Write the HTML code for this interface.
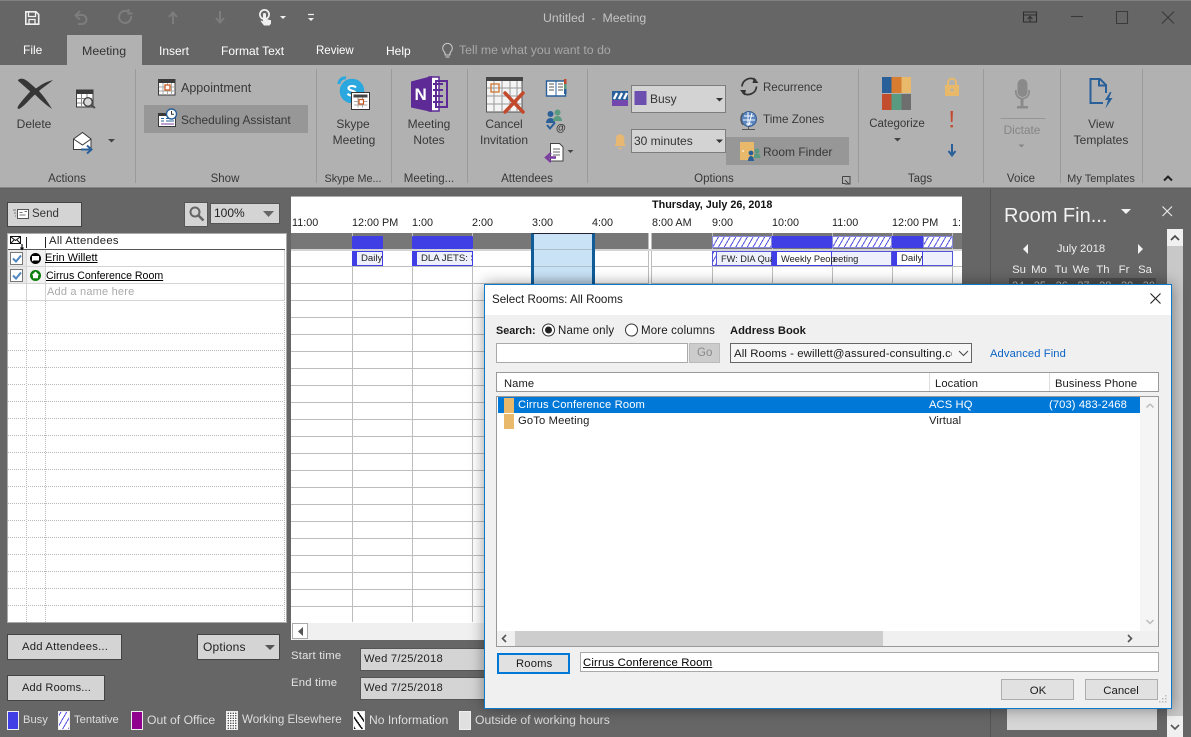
<!DOCTYPE html>
<html><head><meta charset="utf-8"><style>
html,body{margin:0;padding:0}
body{width:1191px;height:737px;overflow:hidden;background:#666;position:relative;font-family:"Liberation Sans",sans-serif;font-size:12px;color:#222}
.t{position:absolute;white-space:nowrap;line-height:16px;height:16px}
.c{transform:translateX(-50%)}
.b{position:absolute;box-sizing:border-box}
.w{color:#fff}
.r{color:#383838;font-size:12px}
.g{font-size:11.500px}
.btn{position:absolute;box-sizing:border-box;background:#d4d4d4;border:1px solid #3e3e3e}
svg{position:absolute;left:0;top:0}
.dlg .t{color:#1a1a1a}
.lg{color:#ddd;font-size:11.800px}
.tm{font-size:10.800px;top:215px}
</style></head><body>
<div class="b" style="left:0;top:0;width:1191px;height:1px;background:#808080"></div>
<div class="b" style="left:67px;top:35px;width:75px;height:31px;background:#b1b1b1"></div>
<div class="b" style="left:0;top:65px;width:1191px;height:123px;background:#b1b1b1"></div>
<div class="b" style="left:144px;top:105px;width:164px;height:28px;background:#979797"></div>
<div class="b" style="left:726px;top:137px;width:123px;height:28px;background:#979797"></div>
<div class="b" style="left:135px;top:69px;width:1px;height:114px;background:#9a9a9a"></div>
<div class="b" style="left:316px;top:69px;width:1px;height:114px;background:#9a9a9a"></div>
<div class="b" style="left:391px;top:69px;width:1px;height:114px;background:#9a9a9a"></div>
<div class="b" style="left:467px;top:69px;width:1px;height:114px;background:#9a9a9a"></div>
<div class="b" style="left:587px;top:69px;width:1px;height:114px;background:#9a9a9a"></div>
<div class="b" style="left:858px;top:69px;width:1px;height:114px;background:#9a9a9a"></div>
<div class="b" style="left:983px;top:69px;width:1px;height:114px;background:#9a9a9a"></div>
<div class="b" style="left:1060px;top:69px;width:1px;height:114px;background:#9a9a9a"></div>
<div class="b" style="left:1142px;top:69px;width:1px;height:114px;background:#9a9a9a"></div>

<div class="t" style="left:543px;top:10px;color:#c4c4c4;font-size:12.300px">Untitled &nbsp;-&nbsp; Meeting</div>
<div class="t w" style="left:23px;top:42px">File</div>
<div class="t" style="left:82px;top:43px;color:#333;font-size:12.400px">Meeting</div>
<div class="t w" style="left:159px;top:43px">Insert</div>
<div class="t w" style="left:221px;top:43px;font-size:12px">Format Text</div>
<div class="t w" style="left:316px;top:43px;font-size:11.500px">Review</div>
<div class="t w" style="left:386px;top:43px">Help</div>
<div class="t" style="left:459px;top:42px;color:#a8a8a8;font-size:12.300px">Tell me what you want to do</div>

<div class="t r c" style="left:34px;top:116px">Delete</div>
<div class="t r" style="left:181px;top:80px;font-size:12.500px">Appointment</div>
<div class="t r" style="left:181px;top:112px;font-size:11.900px">Scheduling Assistant</div>
<div class="t r c" style="left:353px;top:116px">Skype</div>
<div class="t r c" style="left:354px;top:132px">Meeting</div>
<div class="t r c" style="left:429px;top:116px">Meeting</div>
<div class="t r c" style="left:429px;top:132px">Notes</div>
<div class="t r c" style="left:504px;top:116px">Cancel</div>
<div class="t r c" style="left:504px;top:132px">Invitation</div>
<div class="t r" style="left:763px;top:80px;font-size:11.500px">Recurrence</div>
<div class="t r" style="left:763px;top:112px;font-size:11.700px">Time Zones</div>
<div class="t r" style="left:763px;top:144px;font-size:12px">Room Finder</div>
<div class="t r c" style="left:897px;top:116px;font-size:11.500px">Categorize</div>
<div class="t c" style="left:1022px;top:122px;color:#858585;font-size:11.800px">Dictate</div>
<div class="t r c" style="left:1101px;top:116px">View</div>
<div class="t r c" style="left:1101px;top:132px">Templates</div>
<div class="t r c g" style="left:67px;top:171px">Actions</div>
<div class="t r c g" style="left:225px;top:171px">Show</div>
<div class="t r c" style="left:353px;top:171px;font-size:10.800px">Skype Me...</div>
<div class="t r c g" style="left:429px;top:171px">Meeting...</div>
<div class="t r c g" style="left:527px;top:171px">Attendees</div>
<div class="t r c g" style="left:714px;top:171px">Options</div>
<div class="t r c g" style="left:920px;top:171px">Tags</div>
<div class="t r c g" style="left:1021px;top:171px">Voice</div>
<div class="t r c" style="left:1101px;top:171px;font-size:11px">My Templates</div>

<div class="b" style="left:631px;top:85px;width:95px;height:28px;background:#d3d3d3;border:1px solid #7d7d7d"></div>
<div class="t" style="left:650px;top:91px;color:#333">Busy</div>
<div class="b" style="left:631px;top:129px;width:95px;height:24px;background:#d3d3d3;border:1px solid #7d7d7d"></div>
<div class="t" style="left:634px;top:133px;color:#333">30 minutes</div>

<svg width="1191" height="190" viewBox="0 0 1191 190">
<g fill="none" stroke="#f0f0f0" stroke-width="1.600"><path d="M25.800 11.800H36l2.700 2.700v9.700H25.800z"/><path d="M28.500 12v4.500h7V12M29 24v-4.500h6V24" stroke-width="1.300"/></g>
<g fill="none" stroke="#7d7d7d" stroke-width="2"><path d="M76 15h6a4.500 4.500 0 0 1 0 9h-4"/><path d="M80 11l-4.500 4.500 4.500 4" /><path d="M131 16a6 6 0 1 1-2.500-4"/><path d="M128.500 9v4.500h4" /><path d="M173 24v-11M169 17l4-4.500 4 4.500"/><path d="M220 11v11M216 18l4 4.500 4-4.500"/></g>
<circle cx="264.500" cy="14.500" r="4.600" fill="none" stroke="#f0f0f0" stroke-width="1.700"/><path d="M263 14.500a1.500 1.500 0 0 1 3 0v4.500l5 1.200v3.300l-1.500 2h-5.500l-3.500-4.500 1 -.5 1.500 1z" fill="#f0f0f0"/>
<path d="M280 16h6l-3 3zM308 18h6l-3 3z" fill="#f0f0f0"/><path d="M308 14.500h6" stroke="#f0f0f0" stroke-width="1.200"/>
<g fill="none" stroke="#2e2e2e" stroke-width="1.100"><path d="M1023.500 12h13v10h-13zM1023.500 15h13M1030 22v-5M1027.500 19l2.500-2.500 2.500 2.500"/><path d="M1071 16.500h12" stroke="#3a3a3a"/><path d="M1116.500 11.500h11v12h-11z" stroke="#3a3a3a"/><path d="M1162 11.500l12 12M1174 11.500l-12 12" stroke="#3a3a3a"/></g>
<g fill="none" stroke="#d0d0d0" stroke-width="1"><path d="M444 51.500a4.800 4.800 0 1 1 7 0c-1 1-1.200 2-1.200 3.500h-4.600c0-1.500-.2-2.500-1.200-3.500zM445.500 57h4"/></g>

<path d="M18 80c3-2.500 6-1.500 10 1.500l8 7c4-3 9-6.500 17-8.500-4 3.500-10 7.500-14 11 4.500 5 9 11 13 18-6-4-12-9.500-17-14.500-5 4-9 10-15 14-2.500 1-3-.5-1.800-2.500 3-4.500 7-9 12-14.500l-9-8c-2.500-2-3.500-3-3.200-3.500z" fill="#363636"/>
<g><path d="M76.500 90h16.500v17h-16.500z" fill="#fff" stroke="#3a3a3a"/><path d="M76 90h17v4H76z" fill="#3a3a3a"/><path d="M77 98.500h15M77 103h12M81.500 94v13M87 94v13" stroke="#8a8a8a" fill="none"/><circle cx="88" cy="102" r="4.300" fill="#d8d8d8" stroke="#4a4a4a" stroke-width="1.400"/><path d="M91 105l4 3" stroke="#4a4a4a" stroke-width="2"/></g>
<g><path d="M73.500 139l9-6.500 8.500 6.500v10.500h-17.500z" fill="#fff" stroke="#3a3a3a"/><path d="M73.500 139l9 6 8.500-6" fill="none" stroke="#3a3a3a"/><path d="M81 149.500h9M87 145.500l4.500 4-4.500 4" fill="none" stroke="#2a6099" stroke-width="2"/></g>
<path d="M108 139h7l-3.500 3.500z" fill="#444"/>
<g><path d="M158.500 79.500h16.500v15.500h-16.500z" fill="#fff" stroke="#3a3a3a"/><path d="M158 79h17v4h-17z" fill="#3a3a3a"/><path d="M159 87h16M159 91h16M163 83v12M167.500 83v12M171.500 83v12" stroke="#a8a8a8" fill="none"/><path d="M165 85h5v5h-5z" fill="#fff" stroke="#c9581c" stroke-width="1.300"/></g>
<g><path d="M158.500 113.500h17v13h-17z" fill="#fff" stroke="#3a3a3a"/><path d="M158 113h9v3h-9z" fill="#3a3a3a"/><path d="M161 118.500h3M166 118.500h6M161 121h3M166 121h8" stroke="#2a6099" fill="none"/><path d="M161 124h13" stroke="#7b3fa0" fill="none"/><circle cx="171.500" cy="114" r="5" fill="#fff" stroke="#2a6099" stroke-width="1.400"/><path d="M171.500 111v3.200h2.500" stroke="#333" fill="none"/></g>
<g><circle cx="352" cy="91" r="10.500" fill="none" stroke="#29a8e0" stroke-width="3.500"/><path d="M339 84a6 6 0 0 1 7-6" stroke="#29a8e0" stroke-width="3" fill="none"/><circle cx="352" cy="91" r="8.800" fill="#29a8e0"/><path d="M356 87.500c-2-2-7-2.200-7.500.5-.4 3 7.500 2.200 7 5.500-.4 2.800-6 2.600-8 .2" stroke="#fff" stroke-width="2.100" fill="none"/><path d="M351.500 92.500h18v17h-18z" fill="#fff" stroke="#333"/><path d="M353.500 94.500h14v3h-14z" fill="#444"/><path d="M354 101.500h13.500M354 105h13.500M358 97.500v10M362.500 97.500v10" stroke="#aaa"/><path d="M359 99.500h4.500v4.500H359z" fill="#fff" stroke="#c9581c" stroke-width="1.200"/></g>
<g><path d="M429 77h10v34h-10z" fill="#fff" stroke="#5e2a96" stroke-width="1.500"/><path d="M436 81h11v26h-11z" fill="none" stroke="#5e2a96" stroke-width="2"/><path d="M433 84h10M433 90h10M433 96h10M433 102h10" stroke="#5e2a96" stroke-width="2"/><path d="M411 81.500l21-5.500v36l-21-4.500z" fill="#5e2a96"/><text x="414.500" y="100" font-family="Liberation Sans,sans-serif" font-size="17" font-weight="bold" fill="#fff">N</text></g>
<g><path d="M486.500 79h35.500v33h-35.500z" fill="#f4f4f4" stroke="#555"/><path d="M486 77h37v4h-37z" fill="#444"/><path d="M487 88h35M487 96h35M487 104h35M494 81v31M502 81v31M510 81v31M517 81v31" stroke="#999"/><path d="M491 84h8v8h-8z" fill="none" stroke="#d0742c" stroke-width="1.300"/><path d="M505 93l18 19M523 93l-18 19" stroke="#c2492c" stroke-width="3.500" stroke-linecap="round"/></g>
<g><path d="M546.500 81h19v15h-19z" fill="#fff" stroke="#2a6099" stroke-width="1.400"/><path d="M556 81v15" stroke="#2a6099"/><path d="M549 84h5M549 87h5M549 90h5M558 84h5M558 87h5M558 90h5" stroke="#555"/><path d="M564 79h2.500v5H564z" fill="#c2492c"/><path d="M564 84h2.500v5H564z" fill="#5a9a80"/><path d="M564 89h2.500v5H564z" fill="#2a6099"/></g>
<g><circle cx="550.500" cy="114" r="3" fill="#2a6099"/><path d="M546 123c0-3 2-5 4.500-5s4.500 2 4.500 5z" fill="#2a6099"/><circle cx="557.500" cy="112.500" r="3" fill="#5a9a80"/><path d="M553 121c0-3 2-5 4.500-5s4.500 2 4.500 5z" fill="#5a9a80"/><path d="M547 125l3 3.500 5-6" stroke="#2a6099" stroke-width="2" fill="none"/><text x="556" y="131" font-family="Liberation Sans,sans-serif" font-size="10" font-weight="bold" fill="#333">@</text></g>
<g><path d="M550.500 143.500h9l3.500 3.500v14h-12.500z" fill="#fff" stroke="#444"/><path d="M553 149h7M553 152h7M553 155h7" stroke="#666"/><path d="M546 157.500h10" stroke="#7b3fa0" stroke-width="2.600"/><path d="M551 153l-5 4.500 5 4.500" stroke="#7b3fa0" stroke-width="2.400" fill="none"/></g>
<path d="M567.500 150h6l-3 3z" fill="#444"/>
<g><path d="M612 91h16v15h-16z" fill="#7347ad"/><path d="M612 91h16v9h-16z" fill="#2a6099"/><path d="M614 99l3-6M619 99l3-6M624 99l3-6" stroke="#fff" stroke-width="2.400"/></g>
<path d="M634.500 91h12v14h-12z" fill="#6d4fb0"/>
<path d="M716 98h7l-3.500 3.500zM716 139.500h7l-3.500 3.500z" fill="#333"/>
<g fill="#e8b872"><path d="M616 144v-5.500a4.200 4.200 0 0 1 8.400 0V144l2.100 2h-12.700z"/><path d="M618 147.500h4.500l-2.200 2.500z"/></g>
<g fill="none" stroke="#333" stroke-width="1.700"><path d="M742 86.500a8.500 8.500 0 0 1 14-6M756.500 86.500a8.500 8.500 0 0 1-14 6"/></g><path d="M754 77.500l4.500 5.500-6 0zM744.500 95.500l-4.500-5.500 6 0z" fill="#333"/>
<g><circle cx="749" cy="119" r="7.500" fill="#5b86c0" stroke="#3a5f8f"/><path d="M744 116h10M743 120h12M746 124h6M748 112v14M752 113l-3 12" stroke="#fff" stroke-width="1"/><path d="M742 129.500h13M748.500 126.500v3M743 113a9 9 0 0 0 0 12" stroke="#555" fill="none"/></g>
<g><path d="M740 142h14v18h-14z" fill="#e8b96b"/><path d="M742 151h2" stroke="#fff"/><circle cx="757" cy="151" r="2.400" fill="#5a9a80"/><path d="M753.500 158c0-3 1.500-4.500 3.500-4.500s3.500 1.500 3.500 4.500z" fill="#5a9a80"/><circle cx="751" cy="153" r="2.400" fill="#2a6099"/><path d="M748 161c0-3 1.200-5 3-5s3 2 3 5z" fill="#2a6099"/></g>
<path d="M842.500 176.500h7.500v7M849 184l-4-4M845 184h5v-4M842.500 176.500v7h3" fill="none" stroke="#444" stroke-width="1"/>
<g><path d="M882 77h9.500v16H882z" fill="#2a6099"/><path d="M891.500 77h10v16h-10z" fill="#d87c2f"/><path d="M901.500 77h9.500v16h-9.500z" fill="#e8b96b"/><path d="M882 94h9.500v16H882z" fill="#c24e2e"/><path d="M891.500 94h10v16h-10z" fill="#5a9a80"/><path d="M901.500 94h9.500v16h-9.500z" fill="#6e6e6e"/></g>
<path d="M894 138h7l-3.500 3.500z" fill="#444"/>
<g><path d="M945 85h14v11h-14z" fill="#e8b96b"/><path d="M948 85v-2.500a4 4 0 0 1 8 0V85" fill="none" stroke="#e8b96b" stroke-width="2"/><circle cx="952" cy="90" r="1.500" fill="#b1b1b1"/></g>
<path d="M950.500 111h2.400l-.4 11h-1.600zM950.500 125h2.400v2.400h-2.400z" fill="#c2492c"/>
<path d="M952 144v11M948.500 151l3.500 4.500 3.500-4.500" fill="none" stroke="#2a6099" stroke-width="2"/>
<g fill="#8a8a8a"><rect x="1017.500" y="79" width="10" height="18" rx="5"/><path d="M1015 90h1.700v2a5.800 5.800 0 0 0 11.600 0v-2h1.700v2a7.500 7.500 0 0 1-6.500 7.400V106h-3v-6.600a7.500 7.500 0 0 1-5.500-7.400z"/><path d="M1017 106h11v2.500h-11z"/></g>
<path d="M1000.500 118.500h45" stroke="#969696"/>
<path d="M1018.500 144.500h6l-3 3z" fill="#858585"/>
<g fill="none" stroke="#2a6099" stroke-width="2"><path d="M1103 103h-12.500V79h9.500l6 6v8"/><path d="M1099 79.500v6h7"/></g><path d="M1110 92l-5 8h3l-2.500 8.500 7-10.500h-3.500l2.500-6z" fill="#2a6099"/>
<path d="M1164 180.500l4-4 4 4" fill="none" stroke="#222" stroke-width="2"/>
<path d="M0 188h1191" stroke="#5a5a5a" stroke-width="1"/>
</svg>

<div class="btn" style="left:7px;top:202px;width:75px;height:25px;border-color:#444"></div>
<svg width="20" height="20" style="left:13px;top:204px"><path d="M4.500 5.500h11v9h-11z" fill="#fff" stroke="#555"/><path d="M6.500 8.500h3M6.500 11h6M11.500 7.500h2.500" stroke="#777"/><path d="M0 6h3M1 9h2M2 12h1" stroke="#777"/></svg>
<div class="t" style="left:32px;top:206px;font-size:11.500px;color:#333">Send</div>
<div class="btn" style="left:184px;top:202px;width:24px;height:25px;border-color:#555"></div>
<svg width="20" height="20" style="left:187px;top:204px"><circle cx="8" cy="8" r="4.500" fill="none" stroke="#666" stroke-width="2"/><path d="M11.500 11.500l5 5" stroke="#666" stroke-width="2.600"/></svg>
<div class="btn" style="left:210px;top:203px;width:70px;height:21px;border-color:#555"></div>
<div class="t" style="left:214px;top:205px">100%</div>
<svg width="14" height="8" style="left:262px;top:210px"><path d="M1 1h11l-5.500 6z" fill="#666"/></svg>

<div class="b" style="left:7px;top:233px;width:280px;height:390px;background:#fff;border:1px solid #aaa"></div>
<div class="b" style="left:8px;top:317px;width:278px;height:305px;background:repeating-linear-gradient(to bottom,#fff 0,#fff 16px,transparent 16px,transparent 17px),repeating-linear-gradient(to right,#b8b8b8 0,#b8b8b8 1px,#fff 1px,#fff 2px)"></div>
<div class="b" style="left:26px;top:283px;width:1px;height:339px;background:repeating-linear-gradient(to bottom,#b8b8b8 0,#b8b8b8 1px,#fff 1px,#fff 2px)"></div>
<div class="b" style="left:45px;top:283px;width:1px;height:339px;background:repeating-linear-gradient(to bottom,#b8b8b8 0,#b8b8b8 1px,#fff 1px,#fff 2px)"></div>
<div class="b" style="left:284px;top:300px;width:1px;height:322px;background:repeating-linear-gradient(to bottom,#b8b8b8 0,#b8b8b8 1px,#fff 1px,#fff 2px)"></div>
<div class="b" style="left:8px;top:300px;width:277px;height:1px;background:#d4d4d4"></div>
<div class="b" style="left:8px;top:249px;width:277px;height:1px;background:#555"></div>
<div class="b" style="left:8px;top:266px;width:277px;height:1px;background:#d4d4d4"></div>
<div class="b" style="left:8px;top:283px;width:277px;height:1px;background:#d4d4d4"></div>
<div class="b" style="left:8px;top:250px;width:18px;height:33px;background:#e8e8e8"></div>
<div class="b" style="left:27px;top:250px;width:18px;height:33px;background:#f2f2f2"></div>
<div class="b" style="left:8px;top:266px;width:37px;height:1px;background:#d4d4d4"></div>
<div class="b" style="left:26px;top:250px;width:1px;height:50px;background:#d4d4d4"></div>
<div class="b" style="left:45px;top:250px;width:1px;height:50px;background:#d4d4d4"></div>
<div class="b" style="left:284px;top:250px;width:1px;height:50px;background:#d4d4d4"></div>
<div class="b" style="left:26px;top:237px;width:1px;height:11px;background:#222"></div>
<div class="b" style="left:45px;top:237px;width:1px;height:11px;background:#222"></div>
<svg width="22" height="20" style="left:8px;top:233px"><path d="M2.500 3.500h10v7h-10z" fill="#fff" stroke="#111"/><path d="M3 4l4.500 3.500L12 4M3 10l3-3M12 10l-3-3" stroke="#111" fill="none"/><path d="M14 11v5M12.500 14.500l1.500 2 1.500-2" stroke="#111" fill="none" stroke-width="1.200"/></svg>
<div class="t" style="left:49px;top:233px;font-size:11.300px;letter-spacing:.3px">All Attendees</div>
<svg width="40" height="36" style="left:8px;top:250px">
<path d="M2.500 2.500h12v12h-12z" fill="#fff" stroke="#777"/><path d="M5 8.500l3 3 5-6" fill="none" stroke="#4f86bd" stroke-width="2"/>
<path d="M2.500 19.500h12v12h-12z" fill="#fff" stroke="#777"/><path d="M5 25.500l3 3 5-6" fill="none" stroke="#4f86bd" stroke-width="2"/>
<circle cx="27.500" cy="8.500" r="5.500" fill="#000"/><path d="M24 6h7v4.500h-5.500l-1.500 1z" fill="#fff"/>
<circle cx="27.500" cy="25.500" r="5.500" fill="#0a7d0a"/><path d="M27.500 21.500l-3.800 3.800h1.300v3h5v-3h1.300z" fill="#fff"/>
</svg>
<div class="t" style="left:45px;top:250px;color:#000;text-decoration:underline;font-size:11px">Erin Willett</div>
<div class="t" style="left:46px;top:268px;color:#000;text-decoration:underline;font-size:10.600px">Cirrus Conference Room</div>
<div class="t" style="left:47px;top:284px;color:#aaa;font-size:11px;letter-spacing:.2px">Add a name here</div>

<div class="b" style="left:291px;top:196px;width:671px;height:444px;background:#fff;border-top:1px solid #aaa"></div>
<div class="t" style="left:652px;top:197px;font-weight:bold;font-size:10.800px;color:#111">Thursday, July 26, 2018</div>
<div class="t tm" style="left:292px">11:00</div>
<div class="t tm" style="left:352px">12:00 PM</div>
<div class="t tm" style="left:412px">1:00</div>
<div class="t tm" style="left:472px">2:00</div>
<div class="t tm" style="left:532px">3:00</div>
<div class="t tm" style="left:592px">4:00</div>
<div class="t tm" style="left:652px">8:00 AM</div>
<div class="t tm" style="left:712px">9:00</div>
<div class="t tm" style="left:772px">10:00</div>
<div class="t tm" style="left:832px">11:00</div>
<div class="t tm" style="left:892px">12:00 PM</div>
<div class="t tm" style="left:952px;width:9px;overflow:hidden">1:00</div>
<div class="b" style="left:291px;top:233px;width:671px;height:16px;background:#777"></div>
<div class="b" style="left:291px;top:249px;width:671px;height:373px;background-color:#fff;background-image:repeating-linear-gradient(to bottom,#bdbdbd 0,#bdbdbd 1px,transparent 1px,transparent 17px)"></div>
<div class="b" style="left:352px;top:233px;width:1px;height:389px;background:#bdbdbd"></div>
<div class="b" style="left:412px;top:233px;width:1px;height:389px;background:#bdbdbd"></div>
<div class="b" style="left:472px;top:233px;width:1px;height:389px;background:#bdbdbd"></div>
<div class="b" style="left:712px;top:233px;width:1px;height:100px;background:#bdbdbd"></div>
<div class="b" style="left:772px;top:233px;width:1px;height:60px;background:#bdbdbd"></div>
<div class="b" style="left:832px;top:233px;width:1px;height:60px;background:#bdbdbd"></div>
<div class="b" style="left:892px;top:233px;width:1px;height:60px;background:#bdbdbd"></div>
<div class="b" style="left:952px;top:233px;width:1px;height:60px;background:#bdbdbd"></div>
<div class="b" style="left:648px;top:233px;width:4px;height:389px;background:#fff;border-right:1px solid #bdbdbd;border-left:1px solid #bdbdbd"></div>
<div class="b" style="left:592px;top:233px;width:1px;height:60px;background:#bdbdbd"></div>
<div class="b" style="left:531px;top:233px;width:64px;height:55px;background:linear-gradient(#c9e2f6 0,#c9e2f6 40px,#b0c6d8 55px);border-top:1px solid #223;border-left:3px solid #0f5c99;border-right:3px solid #0f5c99"></div>
<div class="b" style="left:534px;top:249px;width:58px;height:1px;background:#aebfcc"></div>
<div class="b" style="left:534px;top:266px;width:58px;height:1px;background:#aebfcc"></div>
<div class="b" style="left:291px;top:249px;width:240px;height:2px;background:#d4d4d4"></div>
<div class="b" style="left:595px;top:249px;width:367px;height:2px;background:#d4d4d4"></div>

<div class="b" style="left:352px;top:236px;width:31px;height:13px;background:#3f3fe5;border-radius:1px"></div>
<div class="b" style="left:412px;top:236px;width:61px;height:13px;background:#3f3fe5;border-radius:1px"></div>
<div class="b" style="left:712px;top:236px;width:60px;height:12px;background:#fff repeating-linear-gradient(-60deg,#5555e0 0,#5555e0 1px,#fff 1px,#fff 5px);border:1px solid #8888dd"></div>
<div class="b" style="left:772px;top:236px;width:60px;height:12px;background:#3f3fe5"></div>
<div class="b" style="left:832px;top:236px;width:60px;height:12px;background:#fff repeating-linear-gradient(-60deg,#5555e0 0,#5555e0 1px,#fff 1px,#fff 5px);border:1px solid #8888dd"></div>
<div class="b" style="left:892px;top:236px;width:31px;height:12px;background:#3f3fe5"></div>
<div class="b" style="left:923px;top:236px;width:30px;height:12px;background:#fff repeating-linear-gradient(-60deg,#5555e0 0,#5555e0 1px,#fff 1px,#fff 5px);border:1px solid #8888dd"></div>

<div class="b" style="left:352px;top:251px;width:31px;height:15px;background:#eef1fb;border:1px solid #3f3fe5;border-left:5px solid #3f3fe5"></div>
<div class="b" style="left:412px;top:251px;width:61px;height:15px;background:#eef1fb;border:1px solid #3f3fe5;border-left:5px solid #3f3fe5"></div>
<div class="b" style="left:712px;top:251px;width:60px;height:15px;background:#eef1fb;border:1px solid #5555d8"></div>
<div class="b" style="left:713px;top:252px;width:4px;height:13px;background:#fff repeating-linear-gradient(-60deg,#5555e0 0,#5555e0 1px,#fff 1px,#fff 4px);border-right:1px solid #5555d8"></div>
<div class="b" style="left:772px;top:251px;width:60px;height:15px;background:#fff;border:1px solid #3f3fe5;border-left:5px solid #3f3fe5"></div>
<div class="b" style="left:832px;top:251px;width:60px;height:15px;background:#eef1fb;border:1px solid #5555d8;border-left:0"></div>
<div class="b" style="left:892px;top:251px;width:61px;height:15px;background:#eef1fb;border:1px solid #5555d8"></div>
<div class="b" style="left:892px;top:251px;width:31px;height:15px;background:#fff;border:1px solid #3f3fe5;border-left:5px solid #3f3fe5"></div>
<div class="t" style="left:361px;top:251px;font-size:9.600px;width:22px;overflow:hidden">Daily</div>
<div class="t" style="left:421px;top:251px;font-size:9.600px;width:51px;overflow:hidden">DLA JETS: Status</div>
<div class="t" style="left:721px;top:251px;font-size:9.200px;width:51px;overflow:hidden">FW: DIA Quarterly</div>
<div class="t" style="left:781px;top:251px;font-size:9.300px">Weekly Peop</div>
<div class="t" style="left:833px;top:251px;font-size:9.300px">eeting</div>
<div class="t" style="left:901px;top:251px;font-size:9.600px">Daily</div>

<div class="b" style="left:292px;top:623px;width:200px;height:17px;background:#f0f0f0"></div>
<div class="b" style="left:292px;top:623px;width:16px;height:16px;background:#fff;border:1px solid #aaa"></div>
<svg width="8" height="10" style="left:297px;top:627px"><path d="M6 0v9L1 4.500z" fill="#555"/></svg>

<div class="btn" style="left:7px;top:634px;width:115px;height:26px;border-color:#444"></div>
<div class="t" style="left:22px;top:639px;letter-spacing:.2px;font-size:11.300px">Add Attendees...</div>
<div class="btn" style="left:197px;top:634px;width:83px;height:26px;border-color:#444"></div>
<div class="t" style="left:203px;top:639px;letter-spacing:.2px">Options</div>
<svg width="14" height="8" style="left:264px;top:644px"><path d="M1 1h10l-5 5z" fill="#555"/></svg>
<div class="btn" style="left:7px;top:675px;width:98px;height:26px;border-color:#444"></div>
<div class="t" style="left:22px;top:680px;letter-spacing:.2px;font-size:11px">Add Rooms...</div>
<div class="t" style="left:291px;top:648px;color:#e4e4e4;font-size:11.300px;letter-spacing:.2px">Start time</div>
<div class="t" style="left:291px;top:675px;color:#e4e4e4;font-size:11.300px;letter-spacing:.2px">End time</div>
<div class="b" style="left:360px;top:648px;width:130px;height:23px;background:#d4d4d4;border:1px solid #555"></div>
<div class="b" style="left:360px;top:677px;width:130px;height:23px;background:#d4d4d4;border:1px solid #555"></div>
<div class="t" style="left:364px;top:651px;letter-spacing:.25px;font-size:11.200px">Wed 7/25/2018</div>
<div class="t" style="left:364px;top:680px;letter-spacing:.25px;font-size:11.200px">Wed 7/25/2018</div>

<div class="b" style="left:7px;top:711px;width:12px;height:19px;background:#3f3fe5;border:1px solid #eee"></div>
<div class="t lg" style="left:23px;top:712px;font-size:11.200px">Busy</div>
<div class="b" style="left:58px;top:711px;width:12px;height:19px;border:1px solid #eee;background:#fff repeating-linear-gradient(-60deg,#5555e0 0,#5555e0 1px,#fff 1px,#fff 5px)"></div>
<div class="t lg" style="left:74px;top:712px;font-size:11.200px">Tentative</div>
<div class="b" style="left:131px;top:711px;width:12px;height:19px;background:#8f008f;border:1px solid #eee"></div>
<div class="t lg" style="left:147px;top:712px;font-size:12.200px">Out of Office</div>
<div class="b" style="left:226px;top:711px;width:12px;height:19px;border:1px solid #eee;background:#fff;background-image:radial-gradient(#444 .6px,transparent .8px);background-size:2.500px 2.500px"></div>
<div class="t lg" style="left:242px;top:712px;font-size:11.600px">Working Elsewhere</div>
<div class="b" style="left:353px;top:711px;width:12px;height:19px;border:1px solid #eee;background:#fff repeating-linear-gradient(55deg,#111 0,#111 1.500px,#fff 1.500px,#fff 6px)"></div>
<div class="t lg" style="left:369px;top:712px;font-size:12.100px">No Information</div>
<div class="b" style="left:459px;top:711px;width:12px;height:19px;background:#e0e0e0;border:1px solid #eee"></div>
<div class="t lg" style="left:475px;top:712px;font-size:12.200px">Outside of working hours</div>

<div class="b" style="left:990px;top:189px;width:1px;height:548px;background:#555"></div>
<div class="t" style="left:1004px;top:203px;height:26px;line-height:26px;color:#f2f2f2;font-size:20px">Room Fin...</div>
<svg width="1191" height="300" style="left:0;top:0">
<path d="M1121 209h10l-5 5z" fill="#f2f2f2"/><path d="M1162.500 206.500l9.500 9.500M1172 206.500l-9.500 9.500" stroke="#ededed" stroke-width="1.100"/>
<path d="M1028 244v10l-5-5zM1138 244v10l5-5z" fill="#f2f2f2"/>
</svg>
<div class="t c" style="left:1081px;top:241px;color:#eee;font-size:11.300px">July 2018</div>
<div class="t c" style="left:1019px;top:262px;color:#eee;font-size:11.300px">Su</div>
<div class="t c" style="left:1039px;top:262px;color:#eee;font-size:11.300px">Mo</div>
<div class="t c" style="left:1061px;top:262px;color:#eee;font-size:11.300px">Tu</div>
<div class="t c" style="left:1081px;top:262px;color:#eee;font-size:11.300px">We</div>
<div class="t c" style="left:1103px;top:262px;color:#eee;font-size:11.300px">Th</div>
<div class="t c" style="left:1124px;top:262px;color:#eee;font-size:11.300px">Fr</div>
<div class="t c" style="left:1145px;top:262px;color:#eee;font-size:11.300px">Sa</div>
<div class="b" style="left:1009px;top:278px;width:147px;height:10px;background:#4c4c4c"></div>
<div class="t" style="left:1012px;top:278px;color:#bbb;font-size:11px;word-spacing:6.500px">24 25 26 27 28 29 30</div>
<div class="b" style="left:1167px;top:229px;width:16px;height:508px;background:#f0f0f0"></div>
<div class="b" style="left:1167px;top:246px;width:16px;height:470px;background:#c8c8c8"></div>
<svg width="16" height="12" style="left:1167px;top:232px"><path d="M4 8l4-4 4 4" fill="none" stroke="#444" stroke-width="1.600"/></svg>
<svg width="16" height="12" style="left:1167px;top:722px"><path d="M4 3l4 4 4-4" fill="none" stroke="#555" stroke-width="1.600"/></svg>
<div class="b" style="left:1007px;top:700px;width:150px;height:30px;background:#d6d6d6"></div>

<div class="b dlg" style="left:484px;top:284px;width:688px;height:425px;background:#f0f0f0;border:1px solid #0f78c8;box-shadow:0 0 14px rgba(0,0,0,.4)">
<div class="b" style="left:0;top:0;width:686px;height:30px;background:#fff"></div>
<div class="t" style="left:7px;top:7px;font-size:11.600px">Select Rooms: All Rooms</div>
<svg width="14" height="14" style="left:664px;top:7px"><path d="M1.500 1.500l10 10M11.500 1.500l-10 10" stroke="#222" stroke-width="1.100"/></svg>
<div class="t" style="left:11px;top:38px;font-weight:bold;font-size:10.800px">Search:</div>
<svg width="16" height="16" style="left:56px;top:37px"><circle cx="7.500" cy="8" r="6" fill="#fff" stroke="#333"/><circle cx="7.500" cy="8" r="3.500" fill="#222"/></svg>
<div class="t" style="left:73px;top:38px;font-size:11.500px;letter-spacing:.15px">Name only</div>
<svg width="16" height="16" style="left:139px;top:37px"><circle cx="7.500" cy="8" r="6" fill="#fff" stroke="#333"/></svg>
<div class="t" style="left:156px;top:38px;font-size:11.500px;letter-spacing:.15px">More columns</div>
<div class="t" style="left:245px;top:38px;font-weight:bold;font-size:11.200px">Address Book</div>
<div class="b" style="left:11px;top:58px;width:192px;height:20px;background:#fff;border:1px solid #aaa"></div>
<div class="b" style="left:204px;top:58px;width:31px;height:20px;background:#ccc;border:1px solid #bbb"></div>
<div class="t" style="left:212px;top:60px;font-size:11.500px"><span style="color:#8a8a8a">Go</span></div>
<div class="b" style="left:245px;top:58px;width:242px;height:20px;background:#f6f6f6;border:1px solid #666"></div>
<div class="t" style="left:249px;top:61px;font-size:11.400px;width:218px;overflow:hidden;letter-spacing:.1px">All Rooms - ewillett@assured-consulting.com</div>
<svg width="12" height="8" style="left:473px;top:65px"><path d="M1 1l4.500 4.500L10 1" fill="none" stroke="#444"/></svg>
<div class="t" style="left:505px;top:61px;font-size:11.200px;letter-spacing:.1px"><span style="color:#0a62c4">Advanced Find</span></div>
<div class="b" style="left:11px;top:87px;width:663px;height:20px;background:#fff;border:1px solid #999"></div>
<div class="b" style="left:444px;top:88px;width:1px;height:18px;background:#ddd"></div>
<div class="b" style="left:564px;top:88px;width:1px;height:18px;background:#ddd"></div>
<div class="t" style="left:19px;top:91px;font-size:11.200px;letter-spacing:.1px">Name</div>
<div class="t" style="left:450px;top:91px;font-size:11.200px;letter-spacing:.1px">Location</div>
<div class="t" style="left:570px;top:91px;font-size:11.200px;letter-spacing:.1px">Business Phone</div>
<div class="b" style="left:11px;top:111px;width:663px;height:251px;background:#fff;border:1px solid #999"></div>
<div class="b" style="left:13px;top:112px;width:642px;height:16px;background:#0078d7"></div>
<div class="b" style="left:19px;top:113px;width:10px;height:15px;background:#e8b96b"></div>
<div class="b" style="left:19px;top:129px;width:10px;height:15px;background:#e8b96b"></div>
<div class="t" style="left:33px;top:112px;font-size:11.200px;letter-spacing:.15px"><span style="color:#fff">Cirrus Conference Room</span></div>
<div class="t" style="left:33px;top:128px;font-size:11.200px;letter-spacing:.15px">GoTo Meeting</div>
<div class="t" style="left:444px;top:112px;font-size:11.200px;letter-spacing:.1px"><span style="color:#fff">ACS HQ</span></div>
<div class="t" style="left:444px;top:128px;font-size:11.200px;letter-spacing:.1px">Virtual</div>
<div class="t" style="left:564px;top:112px;font-size:11.200px;letter-spacing:.1px"><span style="color:#fff">(703) 483-2468</span></div>
<div class="b" style="left:12px;top:346px;width:661px;height:15px;background:#f0f0f0"></div>
<div class="b" style="left:30px;top:346px;width:368px;height:15px;background:#cdcdcd"></div>
<div class="b" style="left:655px;top:112px;width:18px;height:234px;background:#f5f5f5"></div>
<svg width="680" height="380" style="left:0;top:0"><path d="M665 119l-3.500 3.500M665 119l3.500 3.500M661.500 335l3.500 3.500 3.500-3.500" fill="none" stroke="#bbb" stroke-width="1.500"/><path d="M21 350l-3.500 3.500 3.500 3.500M643 350l3.500 3.500-3.500 3.500" fill="none" stroke="#555" stroke-width="1.600"/></svg>
<div class="b" style="left:12px;top:368px;width:73px;height:21px;background:#e1e1e1;border:2px solid #0078d7"></div>
<div class="t" style="left:31px;top:371px;font-size:11.200px;letter-spacing:.2px">Rooms</div>
<div class="b" style="left:95px;top:367px;width:579px;height:20px;background:#fff;border:1px solid #aaa"></div>
<div class="t" style="left:98px;top:370px;font-size:11.400px;text-decoration:underline;letter-spacing:.15px"><span style="color:#000">Cirrus Conference Room</span></div>
<div class="b" style="left:516px;top:394px;width:73px;height:21px;background:#e1e1e1;border:1px solid #adadad"></div>
<div class="b" style="left:600px;top:394px;width:73px;height:21px;background:#e1e1e1;border:1px solid #adadad"></div>
<div class="t c" style="left:553px;top:398px;font-size:11.400px">OK</div>
<div class="t c" style="left:636px;top:398px;font-size:11.400px">Cancel</div>
<svg width="14" height="14" style="left:672px;top:408px"><path d="M8 2h1.500v1.500H8zM5 5h1.500v1.500H5zM8 5h1.500v1.500H8zM2 8h1.500v1.500H2zM5 8h1.500v1.500H5zM8 8h1.500v1.500H8z" fill="#bbb"/></svg>
</div>
</body></html>
